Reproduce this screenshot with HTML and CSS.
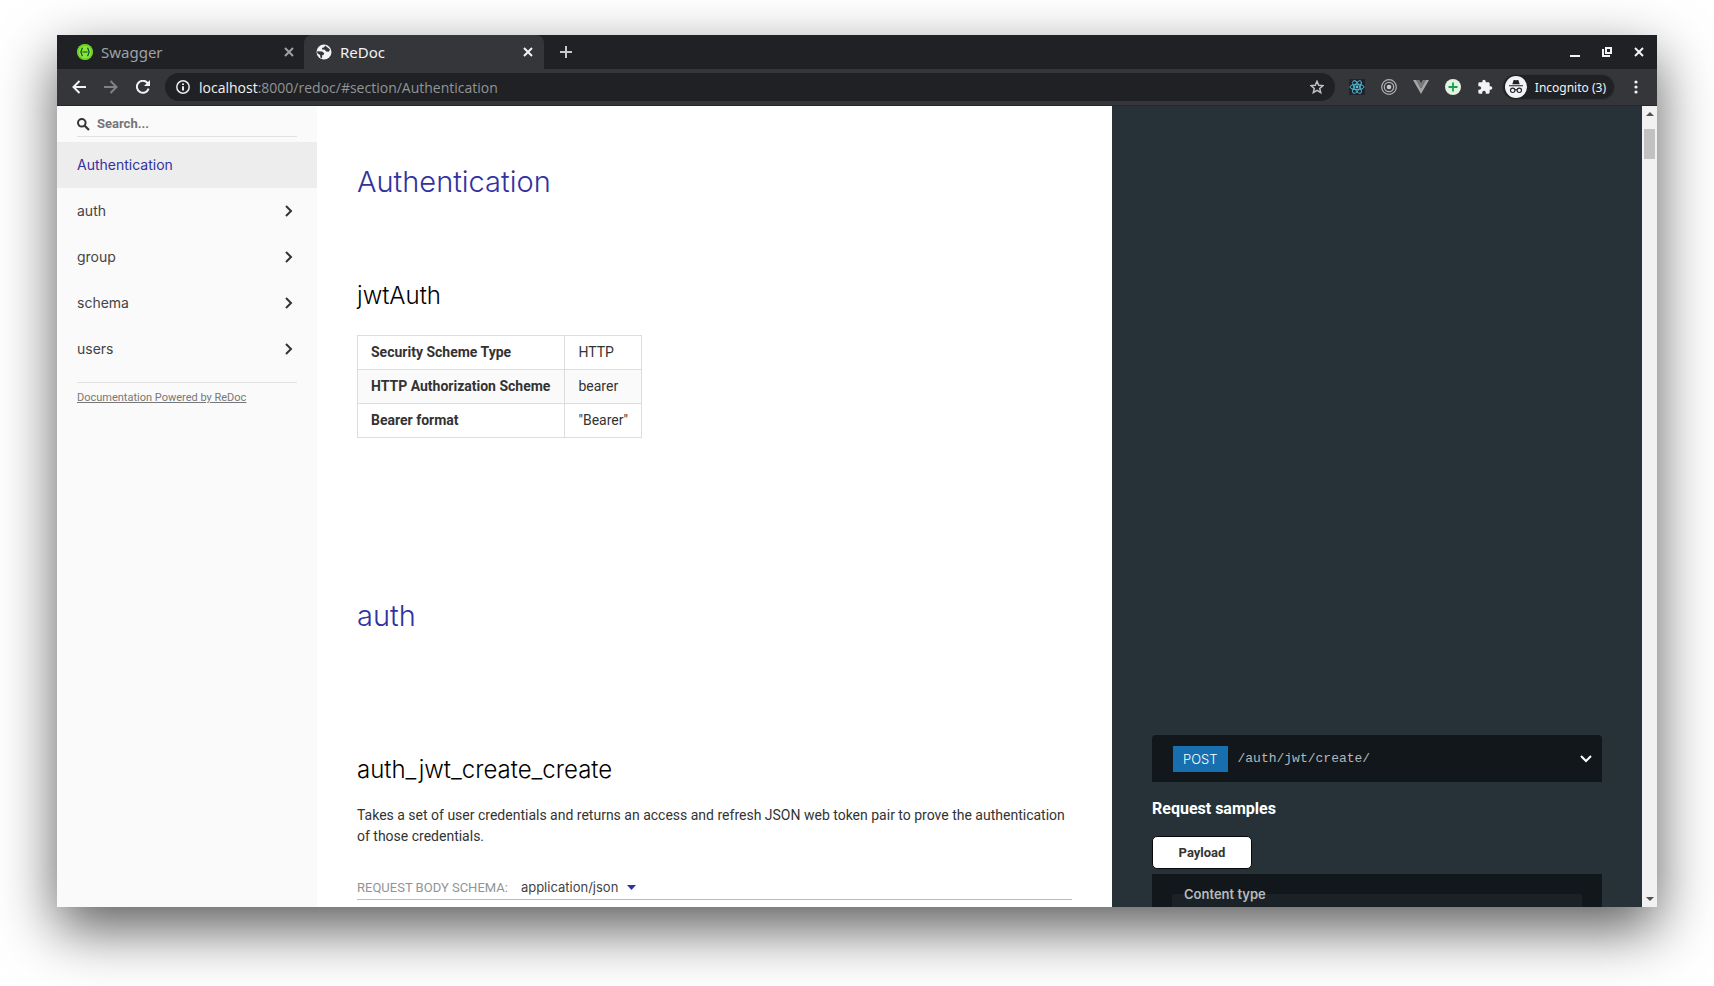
FILE: index.html
```html
<!DOCTYPE html>
<html lang="en">
<head>
<meta charset="utf-8">
<title>ReDoc</title>
<link rel="stylesheet" href="styles.css">
</head>
<body>
<div class="window">
  <header class="tabbar">
    <div class="tab">
      <svg class="favicon" viewBox="0 0 16 16"><circle cx="8" cy="8" r="8" fill="#85ea2d"/><circle cx="8" cy="8" r="7" fill="none" stroke="#5fc02a" stroke-width="1"/><path d="M5.8 4.2C4 4.2 5.2 7.6 3.4 8c1.800.4.6 3.800 2.400 3.800M10.200 4.200C12 4.200 10.800 7.600 12.600 8c-1.800.4-.6 3.800-2.400 3.800M5.500 8h5" fill="none" stroke="#173647" stroke-width="1.200"/></svg>
      <span class="tab-title">Swagger</span>
      <button class="tab-close" aria-label="Close Swagger"><svg viewBox="0 0 10 10"><path d="M1 1l8 8M9 1L1 9"/></svg></button>
    </div>
    <div class="tab tab-active">
      <svg class="favicon" viewBox="0 0 16 16"><circle cx="8" cy="8" r="7.500" fill="#f1f3f4"/><path d="M9.200 1.600L14 5.500l-1.200 2.300-2.600-.4-1.400-1.700-2.600-.2-.2-1.600 2.200-.6zM1 7.200l5.200.3 2 1.700-.5 1.600-1.500.5-.2 3.200-1.600-.9-.3-2.500L1.500 9.500z" fill="#35363a"/></svg>
      <span class="tab-title">ReDoc</span>
      <button class="tab-close" aria-label="Close ReDoc"><svg viewBox="0 0 10 10"><path d="M1 1l8 8M9 1L1 9"/></svg></button>
    </div>
    <button class="new-tab" aria-label="New tab"><svg viewBox="0 0 12 12"><path d="M6 0v12M0 6h12"/></svg></button>
    <div class="window-controls">
      <button aria-label="Minimize"><svg viewBox="0 0 10 10"><path d="M0 9h10"/></svg></button>
      <button aria-label="Restore"><svg viewBox="0 0 10 10"><path d="M4 1h5v5H4zM1 2v7h7"/></svg></button>
      <button aria-label="Close"><svg viewBox="0 0 10 10"><path d="M1 1l8 8M9 1L1 9"/></svg></button>
    </div>
  </header>

  <div class="toolbar">
    <nav class="history">
      <button aria-label="Back"><svg viewBox="0 0 14 14"><path d="M14 7H1.500M7.500 1L1.500 7l6 6"/></svg></button>
      <button class="dim" aria-label="Forward"><svg viewBox="0 0 14 14"><path d="M0 7h12.500M6.500 1l6 6-6 6"/></svg></button>
      <button aria-label="Reload"><svg viewBox="0 0 14 14"><path d="M12.600 8.600A6 6 0 1 1 11.300 2.700L12.500 4"/><path d="M14 0v6H8z" class="solid"/></svg></button>
    </nav>
    <div class="address">
      <svg class="info" viewBox="0 0 14 14"><circle cx="7" cy="7" r="6.200"/><path d="M7 6.200v4.200M7 3.400v1.600"/></svg>
      <span class="url"><span class="host">localhost</span>:8000/redoc/#section/Authentication</span>
      <button class="star" aria-label="Bookmark this page"><svg viewBox="0 0 14 14"><path d="M7 1.300l1.700 3.900 4.200.4-3.200 2.800 1 4.200L7 10.400l-3.700 2.200 1-4.200L1.100 5.600l4.200-.4z"/></svg></button>
    </div>
    <div class="extensions">
      <button aria-label="React Developer Tools"><svg viewBox="0 0 16 16"><path fill="#20232a" d="M0 0h16v16H0z"/><g fill="none" stroke="#53c1de" stroke-width=".9"><ellipse cx="8" cy="8" rx="7" ry="2.700"/><ellipse cx="8" cy="8" rx="7" ry="2.700" transform="rotate(60 8 8)"/><ellipse cx="8" cy="8" rx="7" ry="2.700" transform="rotate(120 8 8)"/></g><circle cx="8" cy="8" r="1.400" fill="#53c1de"/></svg></button>
      <button aria-label="Tracker"><svg viewBox="0 0 16 16"><g fill="none" stroke="#b0b1b3" stroke-width="1.200"><circle cx="8" cy="8" r="7.300"/><circle cx="8" cy="8" r="4.700"/></g><circle cx="8" cy="8" r="2.300" fill="#c6c7c8"/></svg></button>
      <button aria-label="Vue Devtools"><svg viewBox="0 0 16 16"><path fill="#a6a6a6" d="M0 1h3.200L8 9.500 12.800 1H16L8 15z"/><path fill="#7b7b7b" d="M3.200 1h3L8 4.200 9.800 1h3L8 9.500z"/></svg></button>
      <button aria-label="Add"><svg viewBox="0 0 16 16"><circle cx="8" cy="8" r="8" fill="#e4f3df"/><path d="M8 3.500v9M3.500 8h9" stroke="#12a150" stroke-width="1.800"/></svg></button>
      <button aria-label="Extensions"><svg viewBox="0 0 24 24"><path fill="#f1f3f4" d="M20.500 11H19V7c0-1.100-.9-2-2-2h-4V3.500a2.500 2.500 0 0 0-5 0V5H4c-1.100 0-2 .9-2 2v3.800h1.500a2.700 2.700 0 0 1 0 5.400H2V20c0 1.100.9 2 2 2h3.800v-1.500a2.700 2.700 0 0 1 5.400 0V22H17c1.100 0 2-.9 2-2v-4h1.500a2.500 2.500 0 0 0 0-5z"/></svg></button>
    </div>
    <button class="incognito">
      <svg viewBox="0 0 22 22"><circle cx="11" cy="11" r="11" fill="#f1f3f4"/><path fill="#202124" d="M7.300 8.300L8.500 4.500c.3-.6.800-.6 1.300-.4.800.3 1.600.3 2.400 0 .5-.2 1-.2 1.300.4l1.200 3.800zM4 9.200h14v1.100H4z"/><g fill="none" stroke="#202124" stroke-width="1.100"><circle cx="7.700" cy="14.300" r="2.200"/><circle cx="14.300" cy="14.300" r="2.200"/><path d="M9.900 14c.7-.5 1.500-.5 2.200 0"/></g></svg>
      Incognito (3)
    </button>
    <button class="menu" aria-label="Menu"><svg viewBox="0 0 4 14"><circle cx="2" cy="2" r="1.600"/><circle cx="2" cy="7" r="1.600"/><circle cx="2" cy="12" r="1.600"/></svg></button>
  </div>

  <div class="viewport">
    <aside class="sidebar">
      <label class="search">
        <svg viewBox="0 0 13 13"><circle cx="4.800" cy="4.800" r="3.800"/><path d="M7.700 7.700l4.300 4.300" stroke-width="2.200"/></svg>
        <input type="text" placeholder="Search..." aria-label="Search">
      </label>
      <nav class="menu-list">
        <a class="menu-item menu-item-active" href="#authentication">Authentication</a>
        <a class="menu-item" href="#auth">auth <svg viewBox="0 0 8 12"><path d="M1 1l5 5-5 5"/></svg></a>
        <a class="menu-item" href="#group">group <svg viewBox="0 0 8 12"><path d="M1 1l5 5-5 5"/></svg></a>
        <a class="menu-item" href="#schema">schema <svg viewBox="0 0 8 12"><path d="M1 1l5 5-5 5"/></svg></a>
        <a class="menu-item" href="#users">users <svg viewBox="0 0 8 12"><path d="M1 1l5 5-5 5"/></svg></a>
      </nav>
      <div class="credit"><a href="#redoc">Documentation Powered by ReDoc</a></div>
    </aside>

    <main class="docs">
      <section class="section" id="authentication">
        <h1>Authentication</h1>
        <h2>jwtAuth</h2>
        <table class="scheme">
          <tr><th scope="row">Security Scheme Type</th><td>HTTP</td></tr>
          <tr><th scope="row">HTTP Authorization Scheme</th><td>bearer</td></tr>
          <tr><th scope="row">Bearer format</th><td>"Bearer"</td></tr>
        </table>
      </section>
      <section class="section section-tag" id="auth">
        <h1>auth</h1>
      </section>
      <section class="operation">
        <div class="operation-text">
          <h2>auth_jwt_create_create</h2>
          <p>Takes a set of user credentials and returns an access and refresh JSON web token pair to prove the authentication of those credentials.</p>
          <div class="schema-line">
            <label for="mime">REQUEST BODY SCHEMA:</label>
            <span class="select">
              <select id="mime"><option>application/json</option></select>
              <svg viewBox="0 0 9 5"><path d="M0 0h9L4.500 5z"/></svg>
            </span>
          </div>
        </div>
        <div class="samples">
          <button class="endpoint">
            <span class="verb">POST</span>
            <span class="path">/auth/jwt/create/</span>
            <svg viewBox="0 0 12 8"><path d="M1 1l5 5 5-5"/></svg>
          </button>
          <h3>Request samples</h3>
          <button class="sample-tab">Payload</button>
          <div class="sample-panel">
            <div class="content-type"><span>Content type</span></div>
          </div>
        </div>
      </section>
    </main>

    <div class="scrollbar" aria-hidden="true">
      <svg viewBox="0 0 8 4"><path d="M0 4h8L4 0z"/></svg>
      <div class="track"><div class="thumb"></div></div>
      <svg viewBox="0 0 8 4"><path d="M0 0h8L4 4z"/></svg>
    </div>
  </div>
</div>
</body>
</html>
```

FILE: styles.css
```css
* { box-sizing: border-box; }

body {
  margin: 0;
  height: 100vh;
  padding: 35px 57px 79px;
  background: #fff;
  color: #333;
  font: 14px/21px Roboto, sans-serif;
  overflow: hidden;
}

button {
  display: flex;
  align-items: center;
  justify-content: center;
  padding: 0;
  border: 0;
  background: none;
  color: inherit;
  font: inherit;
}

svg { display: block; flex: none; }

.window {
  display: flex;
  flex-direction: column;
  height: 100%;
  box-shadow: 0 22px 54px rgba(0, 0, 0, .64);
}

/* Browser chrome */
.tabbar, .toolbar { font-family: "Noto Sans", sans-serif; color: #f1f3f4; }

.tabbar {
  display: flex;
  align-items: center;
  height: 34px;
  background: #202124;
  font-size: 15px;
  line-height: 20px;
}
.tabbar button svg { width: 10px; height: 10px; fill: none; stroke: currentColor; stroke-width: 2; }
.tab {
  display: flex;
  align-items: center;
  gap: 8px;
  width: 247px;
  height: 34px;
  padding: 0 7px 0 20px;
  color: #9ea1a5;
}
.tab-active {
  width: 240px;
  padding: 0 8px 0 12px;
  border-radius: 8px 8px 0 0;
  background: #35363a;
  color: #f1f3f4;
}
.favicon { width: 16px; height: 16px; }
.tab-title { flex: 1; }
.tab-close { width: 16px; height: 16px; }
.new-tab { width: 44px; height: 34px; color: #c6c8ca; }
.tabbar .new-tab svg { width: 12px; height: 12px; }
.window-controls { display: flex; gap: 22px; margin-left: auto; padding-right: 13px; }

.toolbar {
  display: flex;
  align-items: center;
  height: 37px;
  padding-left: 15px;
  background: #35363a;
  border-bottom: 1px solid #25262a;
  font-size: 14px;
}
.history { display: flex; gap: 18px; margin-right: 15px; }
.history svg { width: 14px; height: 14px; fill: none; stroke: #f1f3f4; stroke-width: 2; }
.history .solid { fill: #f1f3f4; stroke: none; }
.history .dim { opacity: .4; }
.address {
  display: flex;
  flex: 1;
  align-items: center;
  gap: 9px;
  height: 28px;
  padding: 0 11px;
  border-radius: 14px;
  background: #202124;
}
.address svg { width: 14px; height: 14px; fill: none; stroke: #e8eaed; stroke-width: 2; }
.address .info circle { stroke-width: 1.5; }
.address .star svg { stroke: #c0c2c5; stroke-width: 1.5; }
.url { flex: 1; color: #919498; font-family: "Open Sans", sans-serif; }
.host { color: #f1f3f4; }
.extensions { display: flex; gap: 16px; margin: 0 9px 0 14px; }
.extensions svg { width: 16px; height: 16px; }
.incognito {
  gap: 8px;
  height: 26px;
  padding: 0 8px 0 2px;
  border: 1px solid #303136;
  border-radius: 13px;
  background: #202124;
  font-size: 12px;
}
.incognito svg { width: 22px; height: 22px; }
.menu { width: 42px; height: 28px; }
.menu svg { width: 4px; height: 14px; fill: #f1f3f4; }

/* Page */
.viewport {
  display: flex;
  flex: 1;
  min-height: 0;
  overflow: hidden;
  background: #fff;
}

.sidebar { width: 260px; flex: none; background: #fafafa; }
.search {
  display: flex;
  align-items: center;
  gap: 7px;
  height: 31px;
  margin: 0 20px 5px;
  padding-top: 6px;
  border-bottom: 1px solid #e1e1e1;
}
.search svg { width: 13px; height: 13px; fill: none; stroke: #333; stroke-width: 2; }
.search input {
  flex: 1;
  min-width: 0;
  padding: 0;
  border: 0;
  background: none;
  font: bold 13px/20px Roboto, sans-serif;
}
.search input::placeholder { color: #757575; opacity: 1; }
.menu-item {
  display: flex;
  align-items: center;
  justify-content: space-between;
  height: 46px;
  padding: 0 24px 0 20px;
  color: #444;
  font: 14px/20px Inter, sans-serif;
  text-decoration: none;
}
.menu-item-active { background: #ededed; color: #32329f; }
.menu-item svg { width: 8px; height: 12px; fill: none; stroke: #333; stroke-width: 2; }
.credit {
  margin: 10px 20px 0;
  padding-top: 5px;
  border-top: 1px solid #e1e1e1;
  font-size: 11px;
  line-height: 20px;
}
.credit a { color: #777; }

.docs { flex: 1; min-width: 0; background: linear-gradient(to right, #fff 60%, #263238 60%); }
.section { width: 60%; padding: 58px 40px 102px; }
.section-tag { padding-bottom: 40px; }
h1, h2 { margin: 0; font-family: Inter, sans-serif; font-weight: 300; }
h1 { color: #32329f; font-size: 29px; line-height: 36px; }
h2 { margin-bottom: 20px; color: #000; font-size: 24px; line-height: 30px; }
h1 + h2 { margin-top: 81px; margin-bottom: 24px; }

.scheme { border-collapse: collapse; line-height: 21px; }
.scheme th, .scheme td { height: 34px; padding: 0 13px; border: 1px solid #ddd; text-align: left; }
.scheme th { padding-right: 14px; }
.scheme tr:nth-child(2) { background: #fafafa; }

.operation { display: grid; grid-template-columns: 60% 40%; }
.operation-text { padding: 81px 40px 0; }
p { margin: 0; }
.operation p + div { margin-top: 28px; }
.schema-line {
  display: flex;
  align-items: center;
  gap: 13px;
  height: 25px;
  border-bottom: 1px solid #bbb;
  color: #909498;
  font-size: 13px;
}
.select { display: flex; align-items: center; gap: 8px; }
.select select {
  padding: 0;
  border: 0;
  appearance: none;
  background: none;
  color: #444;
  font: 13px/20px Inter, sans-serif;
}
.select svg { width: 9px; height: 5px; fill: #32329f; }

.samples { padding: 61px 40px 0; color: #fff; }
.endpoint {
  width: 100%;
  height: 47px;
  padding: 0 10px 0 21px;
  gap: 10px;
  border-radius: 4px 4px 0 0;
  background: #11171a;
}
.endpoint svg { width: 12px; height: 8px; fill: none; stroke: #fff; stroke-width: 2; }
.verb { padding: 3px 10px; background: #186faf; font: 300 13px/20px Inter, sans-serif; }
.path { flex: 1; color: #b5b8ba; font: 13px/20px "Liberation Mono", monospace; text-align: left; }
h3 { margin: 15px 0 16px; font-size: 16px; line-height: 23px; }
.sample-tab {
  width: 100px;
  height: 33px;
  margin-bottom: 5px;
  border: 1px solid #07090b;
  border-radius: 5px;
  background: #fff;
  color: #333;
  font-size: 13px;
  font-weight: bold;
}
.sample-panel { padding: 20px; background: #11171a; }
.content-type {
  display: flex;
  align-items: flex-start;
  height: 50px;
  padding: 0 12px;
  border-radius: 2px;
  background: #1a2227;
  color: #b8babb;
  font: 600 13px/20px Inter, sans-serif;
}
.content-type span { margin-top: -10px; }

.scrollbar {
  display: flex;
  flex-direction: column;
  align-items: center;
  width: 15px;
  flex: none;
  padding: 6px 2px;
  background: #f1f1f1;
}
.scrollbar svg { width: 8px; height: 4px; fill: #505050; }
.track { flex: 1; align-self: stretch; padding-top: 13px; }
.thumb { height: 30px; background: #c1c1c1; }
```
